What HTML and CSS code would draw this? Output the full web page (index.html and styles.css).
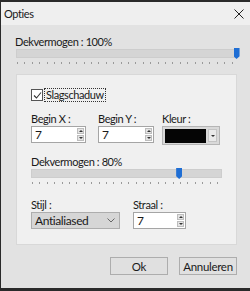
FILE: index.html
```html
<!DOCTYPE html>
<html lang="nl">
<head>
    <meta charset="UTF-8">
    <title>Opties</title>
    <link rel="stylesheet" href="styles.css">
</head>
<body>
    <div class="window">
        <div class="titlebar">
            <span class="title">Opties</span>
            <svg class="close" width="10" height="10" viewBox="0 0 10 10">
                <path d="M0.5 0.5 L9.5 9.5 M9.5 0.5 L0.5 9.5" stroke="#222" stroke-width="1" fill="none"/>
            </svg>
        </div>

        <div class="content">
            <div class="label">Dekvermogen : 100%</div>
            <div class="slider wide">
                <div class="track"></div>
                <div class="thumb" style="left: 98%;"></div>
                <div class="ticks"></div>
            </div>

            <div class="group">
                <div class="check-row">
                    <span class="checkbox">
                        <svg width="9" height="9" viewBox="0 0 9 9">
                            <path d="M1 4.5 L3.5 7 L8 1.5" stroke="#333" stroke-width="1.1" fill="none"/>
                        </svg>
                    </span>
                    <span class="check-label">Slagschaduw</span>
                </div>

                <div class="fields">
                    <div class="field fx">
                        <div class="label">Begin X :</div>
                        <div class="spin">
                            <span class="value">7</span>
                            <span class="spin-btns"><i class="up"></i><i class="down"></i></span>
                        </div>
                    </div>
                    <div class="field fy">
                        <div class="label">Begin Y :</div>
                        <div class="spin">
                            <span class="value">7</span>
                            <span class="spin-btns"><i class="up"></i><i class="down"></i></span>
                        </div>
                    </div>
                    <div class="field fc">
                        <div class="label">Kleur :</div>
                        <div class="color-pick">
                            <span class="swatch"></span>
                            <span class="drop"><i></i></span>
                        </div>
                    </div>
                </div>

                <div class="label">Dekvermogen : 80%</div>
                <div class="slider narrow">
                    <div class="track"></div>
                    <div class="thumb" style="left: 76%;"></div>
                    <div class="ticks"></div>
                </div>

                <div class="fields bottom-fields">
                    <div class="field fs">
                        <div class="label">Stijl :</div>
                        <div class="select">
                            <span>Antialiased</span>
                            <svg width="8" height="5" viewBox="0 0 8 5">
                                <path d="M0.5 0.5 L4 4 L7.5 0.5" stroke="#666" stroke-width="1" fill="none"/>
                            </svg>
                        </div>
                    </div>
                    <div class="field fr">
                        <div class="label">Straal :</div>
                        <div class="spin">
                            <span class="value">7</span>
                            <span class="spin-btns"><i class="up"></i><i class="down"></i></span>
                        </div>
                    </div>
                </div>
            </div>

            <div class="buttons">
                <button class="btn">Ok</button>
                <button class="btn">Annuleren</button>
            </div>
        </div>
    </div>
</body>
</html>
```

FILE: styles.css
```css
body {
    margin: 0;
    width: 250px;
    height: 291px;
    background: #2a2a2a;
    font-family: Lato, 'Noto Sans', sans-serif;
    font-size: 11px;
    letter-spacing: -0.4px;
    color: #1a1a1a;
    overflow: hidden;
}

.window {
    margin: 2px 0 0 1px;
    height: 286px;
    background: #e2e2e2;
}

.titlebar {
    height: 23px;
    display: flex;
    align-items: center;
    justify-content: space-between;
    padding: 0 6px 0 3px;
    background: #efefef;
}

.content {
    padding: 10px 13px 0 14px;
}

.label {
    line-height: 14px;
}

/* sliders */
.slider {
    position: relative;
}

.slider .track {
    height: 7px;
    background: #d5d5d5;
    border: 1px solid #cdcdcd;
}

.slider .thumb {
    position: absolute;
    top: -1px;
    width: 6px;
    height: 11px;
    background: #1f6ed4;
    clip-path: polygon(0 0, 100% 0, 100% 75%, 50% 100%, 0 75%);
}

.slider .ticks {
    height: 2px;
    margin: 4px 1px 0;
    background: repeating-linear-gradient(90deg, #9a9a9a 0 1px, transparent 1px 7.4px);
}

.slider.wide {
    width: 222px;
    margin-left: 1px;
}

.slider.narrow {
    width: 191px;
}

/* group box */
.group {
    margin-top: 10px;
    width: 221px;
    height: 171px;
    box-sizing: border-box;
    margin-left: 1px;
    padding: 13px 0 0 14px;
    background: #f0f0f0;
    border: 1px solid #d8d8d8;
}

.check-row {
    display: flex;
    align-items: center;
    gap: 1px;
}

.checkbox {
    width: 10px;
    height: 10px;
    border: 1px solid #555;
    background: #fff;
    display: flex;
    align-items: center;
    justify-content: center;
}

.check-label {
    border: 1px dotted #333;
    padding: 0 1px;
    line-height: 12px;
}

.fields {
    display: flex;
    margin-top: 10px;
}

.fx { width: 67px; }
.fy { width: 64px; }
.fs { width: 102px; }

.spin {
    display: flex;
    align-items: center;
    justify-content: space-between;
    height: 15px;
    background: #fff;
    border: 1px solid #a5a5a5;
    padding: 0 1px 0 3px;
    font-size: 12px;
}

.fx .spin { width: 49px; }
.fy .spin { width: 50px; }
.fr .spin { width: 47px; }

.spin-btns {
    display: flex;
    flex-direction: column;
    gap: 1px;
}

.spin-btns i {
    width: 7px;
    height: 6px;
    background: #e4e4e4;
    border: 1px solid #bdbdbd;
    box-sizing: border-box;
    position: relative;
}

.spin-btns i::after {
    content: "";
    position: absolute;
    left: 1px;
    border-left: 2px solid transparent;
    border-right: 2px solid transparent;
}

.spin-btns .up::after {
    top: 1px;
    border-bottom: 2px solid #333;
}

.spin-btns .down::after {
    top: 1px;
    border-top: 2px solid #333;
}

.color-pick {
    display: flex;
    align-items: center;
    gap: 2px;
    width: 52px;
    height: 15px;
    padding: 1px 2px;
    background: #d9d9d9;
    border: 1px solid #b5b5b5;
}

.swatch {
    width: 42px;
    height: 14px;
    background: #050505;
}

.drop {
    width: 9px;
    height: 13px;
    background: #eaeaea;
    border: 1px solid #c4c4c4;
    box-sizing: border-box;
    display: flex;
    align-items: center;
    justify-content: center;
}

.drop i {
    border-left: 2px solid transparent;
    border-right: 2px solid transparent;
    border-top: 2px solid #333;
}

.group > .label {
    margin-top: 10px;
}

.bottom-fields {
    margin-top: 14px;
}

.select {
    display: flex;
    align-items: center;
    justify-content: space-between;
    width: 89px;
    height: 17px;
    box-sizing: border-box;
    padding: 0 4px 0 3px;
    background: #d6d6d6;
    border: 1px solid #adadad;
    font-size: 12px;
}

/* buttons */
.buttons {
    display: flex;
    justify-content: flex-end;
    gap: 11px;
    margin-top: 12px;
}

.btn {
    width: 58px;
    height: 18px;
    padding: 0;
    font-family: inherit;
    font-size: 11.5px;
    letter-spacing: -0.3px;
    color: #1a1a1a;
    background: #e0e0e0;
    border: 1px solid #adadad;
}
```
